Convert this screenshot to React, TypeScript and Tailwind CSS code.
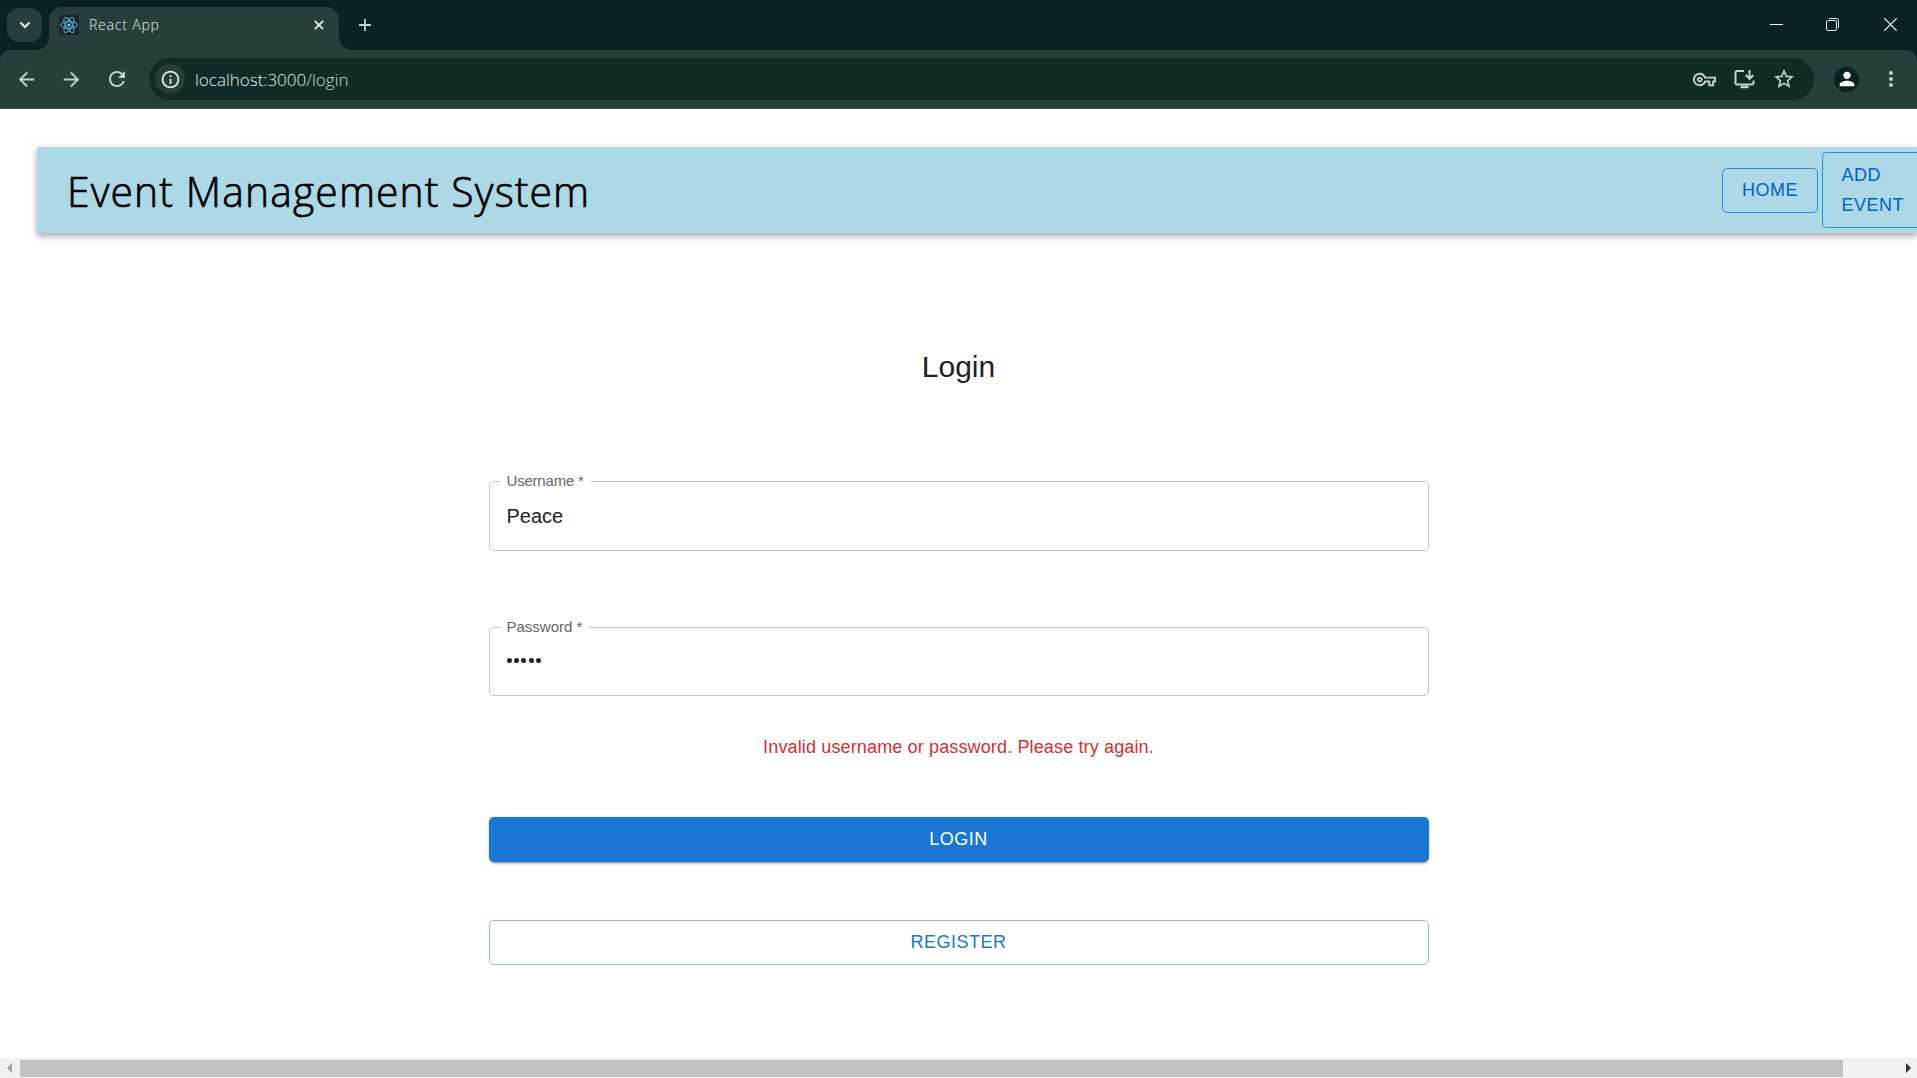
import React from "react";
import {
  MdArrowBack,
  MdArrowForward,
  MdInfoOutline,
  MdMoreVert,
  MdOutlineVpnKey,
  MdPerson,
  MdRefresh,
  MdStarBorder,
} from "react-icons/md";

function ReactLogo() {
  return (
    <svg viewBox="0 0 20 20" className="size-5 shrink-0" fill="none" stroke="#4cb8d8" strokeWidth="1">
      <rect width="20" height="20" rx="1.5" fill="#20232a" stroke="none" />
      <ellipse cx="10" cy="10" rx="8.5" ry="3.3" />
      <ellipse cx="10" cy="10" rx="8.5" ry="3.3" transform="rotate(60 10 10)" />
      <ellipse cx="10" cy="10" rx="8.5" ry="3.3" transform="rotate(120 10 10)" />
      <circle cx="10" cy="10" r="1.6" fill="#61dafb" stroke="none" />
    </svg>
  );
}

function TabStrip() {
  return (
    <div className="flex h-[50px] bg-[#0a2322]">
      <div className="mt-2 ml-[7px] flex h-[34px] w-[35px] items-center justify-center rounded-[12px] bg-[#263f3c]">
        <svg viewBox="0 0 12 8" className="h-2 w-3" fill="none" stroke="#e3f1ee" strokeWidth="2">
          <path d="M1.5 1.5 6 6l4.5-4.5" />
        </svg>
      </div>
      <svg viewBox="0 0 14 14" className="-ml-[7px] size-[14px] self-end" fill="#263f3c">
        <path d="M14 0v14H0C9 14 14 9 14 0Z" />
      </svg>
      <div className="mt-[7px] flex h-[43px] w-[290px] items-start rounded-t-[13px] bg-[#263f3c] pt-2 pl-[10px]">
        <ReactLogo />
        <span className="ml-[10px] font-['Open_Sans'] text-[14px] leading-[20px] font-light tracking-[0.8px] text-[#e3f1ee]">
          React App
        </span>
        <svg viewBox="0 0 10 10" className="mt-[5px] mr-[15px] ml-auto size-[10px]" stroke="#e3f1ee" strokeWidth="1.8">
          <path d="m.8.8 8.400 8.400M9.200.8.8 9.200" />
        </svg>
      </div>
      <svg viewBox="0 0 14 14" className="size-[14px] self-end" fill="#263f3c">
        <path d="M0 0v14h14C5 14 0 9 0 0Z" />
      </svg>
      <svg viewBox="0 0 12 12" className="mt-[19px] ml-[6px] size-3" stroke="#b9d6d0" strokeWidth="1.8">
        <path d="M6 0v12M0 6h12" />
      </svg>
      <div className="mt-[18px] mr-5 ml-auto flex h-[13px] gap-[43px]">
        <svg viewBox="0 0 13 13" className="size-[13px]" stroke="#fff">
          <path d="M0 6.500h13" />
        </svg>
        <svg viewBox="0 0 13 13" className="size-[13px]" fill="none" stroke="#e8eeed" strokeWidth="1">
          <rect x=".5" y="2.500" width="10" height="10" rx="1.500" />
          <path d="M3 .5h7.500a2 2 0 0 1 2 2V10" />
        </svg>
        <svg viewBox="0 0 13 13" className="ml-[2px] size-[13px]" stroke="#fff" strokeWidth="1.200">
          <path d="m.3.3 12.400 12.400M12.700.3.3 12.700" />
        </svg>
      </div>
    </div>
  );
}

function InstallIcon() {
  return (
    <svg viewBox="0 0 21 20" className="h-5 w-[21px]" fill="none" stroke="#c5d3d0" strokeWidth="2">
      <path d="M10 2H3a1.500 1.500 0 0 0-1.500 1.500V14A1.500 1.500 0 0 0 3 15.500h15A1.500 1.500 0 0 0 19.500 14v-2.500" />
      <path d="M6.500 18h8" strokeWidth="2.500" />
      <path d="M15.500 1v8.500M11.700 6l3.800 3.800L19.300 6" />
    </svg>
  );
}

function Toolbar() {
  return (
    <div className="bg-[#0a2322]">
      <div className="flex h-[59px] items-center rounded-t-[10px] border-b border-[#3c5350] bg-[#263f3c] text-[#b4d8d0]">
        <MdArrowBack className="ml-[15px] size-[23px]" />
        <MdArrowForward className="ml-[22px] size-[23px]" />
        <MdRefresh className="ml-[22px] size-[24px]" />
        <div className="ml-5 flex h-[42px] w-[1665px] items-center rounded-full bg-[#112b28] pr-[18px] pl-[6px]">
          <div className="flex size-[30px] items-center justify-center rounded-full bg-[#263f3c] text-[#e3f1ee]">
            <MdInfoOutline className="size-[21px]" />
          </div>
          <span className="mt-[2px] ml-[10px] font-['Open_Sans'] text-[17px] leading-6 font-light text-[#e3f1ee]">
            localhost:3000<span className="text-[#c9d6d3]">/login</span>
          </span>
          <div className="ml-auto flex items-center text-[#c5d3d0]">
            <MdOutlineVpnKey className="size-[23px]" />
            <div className="ml-[18px]">
              <InstallIcon />
            </div>
            <MdStarBorder className="ml-[17px] size-6" />
          </div>
        </div>
        <div className="ml-5 flex size-[25px] items-center justify-center rounded-full bg-[#0a2322] text-white">
          <MdPerson className="size-[22px]" />
        </div>
        <MdMoreVert className="ml-5 size-6" />
      </div>
    </div>
  );
}

function SiteHeader() {
  return (
    <header className="mt-[38px] ml-[37px] flex h-[86px] items-center bg-[#add8e6] pl-[30px] shadow-[0_2px_5px_-1px_rgba(0,0,0,0.2),0_5px_6px_0_rgba(0,0,0,0.14),0_1px_12px_0_rgba(0,0,0,0.12)]">
      <h1 className="mt-[2px] origin-left scale-x-[0.949] font-['Open_Sans'] text-[43px] leading-[64px] font-light tracking-[1.2px] whitespace-nowrap text-black [-webkit-text-stroke:0.7px_black]">
        Event Management System
      </h1>
      <nav className="ml-auto flex items-center gap-1 text-[18px] leading-[30px] tracking-[0.5px] text-[#005fd3]">
        <button className="h-[45px] w-24 rounded-[5px] border border-[#2b90dc] text-center">HOME</button>
        <button className="h-[76px] w-[95px] rounded-l-[5px] border border-r-0 border-[#2b90dc] pl-[18.500px] text-left">
          ADD
          <br />
          EVENT
        </button>
      </nav>
    </header>
  );
}

function Field({ label, children }: { label: string; children: React.ReactNode }) {
  return (
    <fieldset className="h-full rounded-[5px] border border-[#c4c4c4] pl-[10px]">
      <legend className="h-[14px] px-[7px] text-[15px] leading-[13px] text-[#666]">{label}</legend>
      {children}
    </fieldset>
  );
}

function LoginForm() {
  return (
    <main className="flex flex-col items-center">
      <h2 className="mt-[112px] text-[30px] leading-[44px] text-[#212121]">Login</h2>
      <form className="flex w-[940px] flex-col">
        <div className="mt-[85px] h-[77px] tracking-[-0.2px]">
          <Field label="Username *">
            <div className="px-[7px] pt-[16px] text-[20px] leading-[24px] tracking-normal text-[#212121]">Peace</div>
          </Field>
        </div>
        <div className="mt-[69px] h-[76px]">
          <Field label="Password *">
            <div className="flex gap-[2.400px] px-[7px] pt-[24px]">
              {[0, 1, 2, 3, 4].map((i) => (
                <span key={i} className="size-[5px] rounded-full bg-[#212121]" />
              ))}
            </div>
          </Field>
        </div>
        <p className="mt-[36px] text-center text-[18px] leading-[30px] tracking-[0.14px] text-[#d32f2f]">
          Invalid username or password. Please try again.
        </p>
        <button
          type="button"
          className="mt-[55px] h-[45px] rounded-[5px] bg-[#1976d2] pb-[2px] text-[18px] leading-[30px] tracking-[0.5px] text-white shadow-[0_3px_1px_-2px_rgba(0,0,0,0.2),0_2px_2px_0_rgba(0,0,0,0.14),0_1px_5px_0_rgba(0,0,0,0.12)]"
        >
          LOGIN
        </button>
        <button
          type="button"
          className="mt-[58px] h-[45px] rounded-[5px] border border-[#8cbae8] pb-[2px] text-[18px] leading-[30px] tracking-[0.5px] text-[#1976d2]"
        >
          REGISTER
        </button>
      </form>
    </main>
  );
}

function ScrollBar() {
  return (
    <div className="mt-auto flex h-5 items-center bg-[#f1f1f1]">
      <svg viewBox="0 0 5 10" className="ml-[7px] h-[10px] w-[5px]" fill="#a3a3a3">
        <path d="M5 0v10L0 5Z" />
      </svg>
      <div className="ml-2 h-[17px] w-[1823px] bg-[#c1c1c1]" />
      <svg viewBox="0 0 5 10" className="mr-[6px] ml-auto h-[10px] w-[5px]" fill="#303030">
        <path d="M0 0v10l5-5Z" />
      </svg>
    </div>
  );
}

export default function App() {
  return (
    <div className="flex h-[1078px] w-[1917px] flex-col overflow-hidden bg-white font-['Liberation_Sans',Arial,sans-serif]">
      <TabStrip />
      <Toolbar />
      <SiteHeader />
      <LoginForm />
      <ScrollBar />
    </div>
  );
}
